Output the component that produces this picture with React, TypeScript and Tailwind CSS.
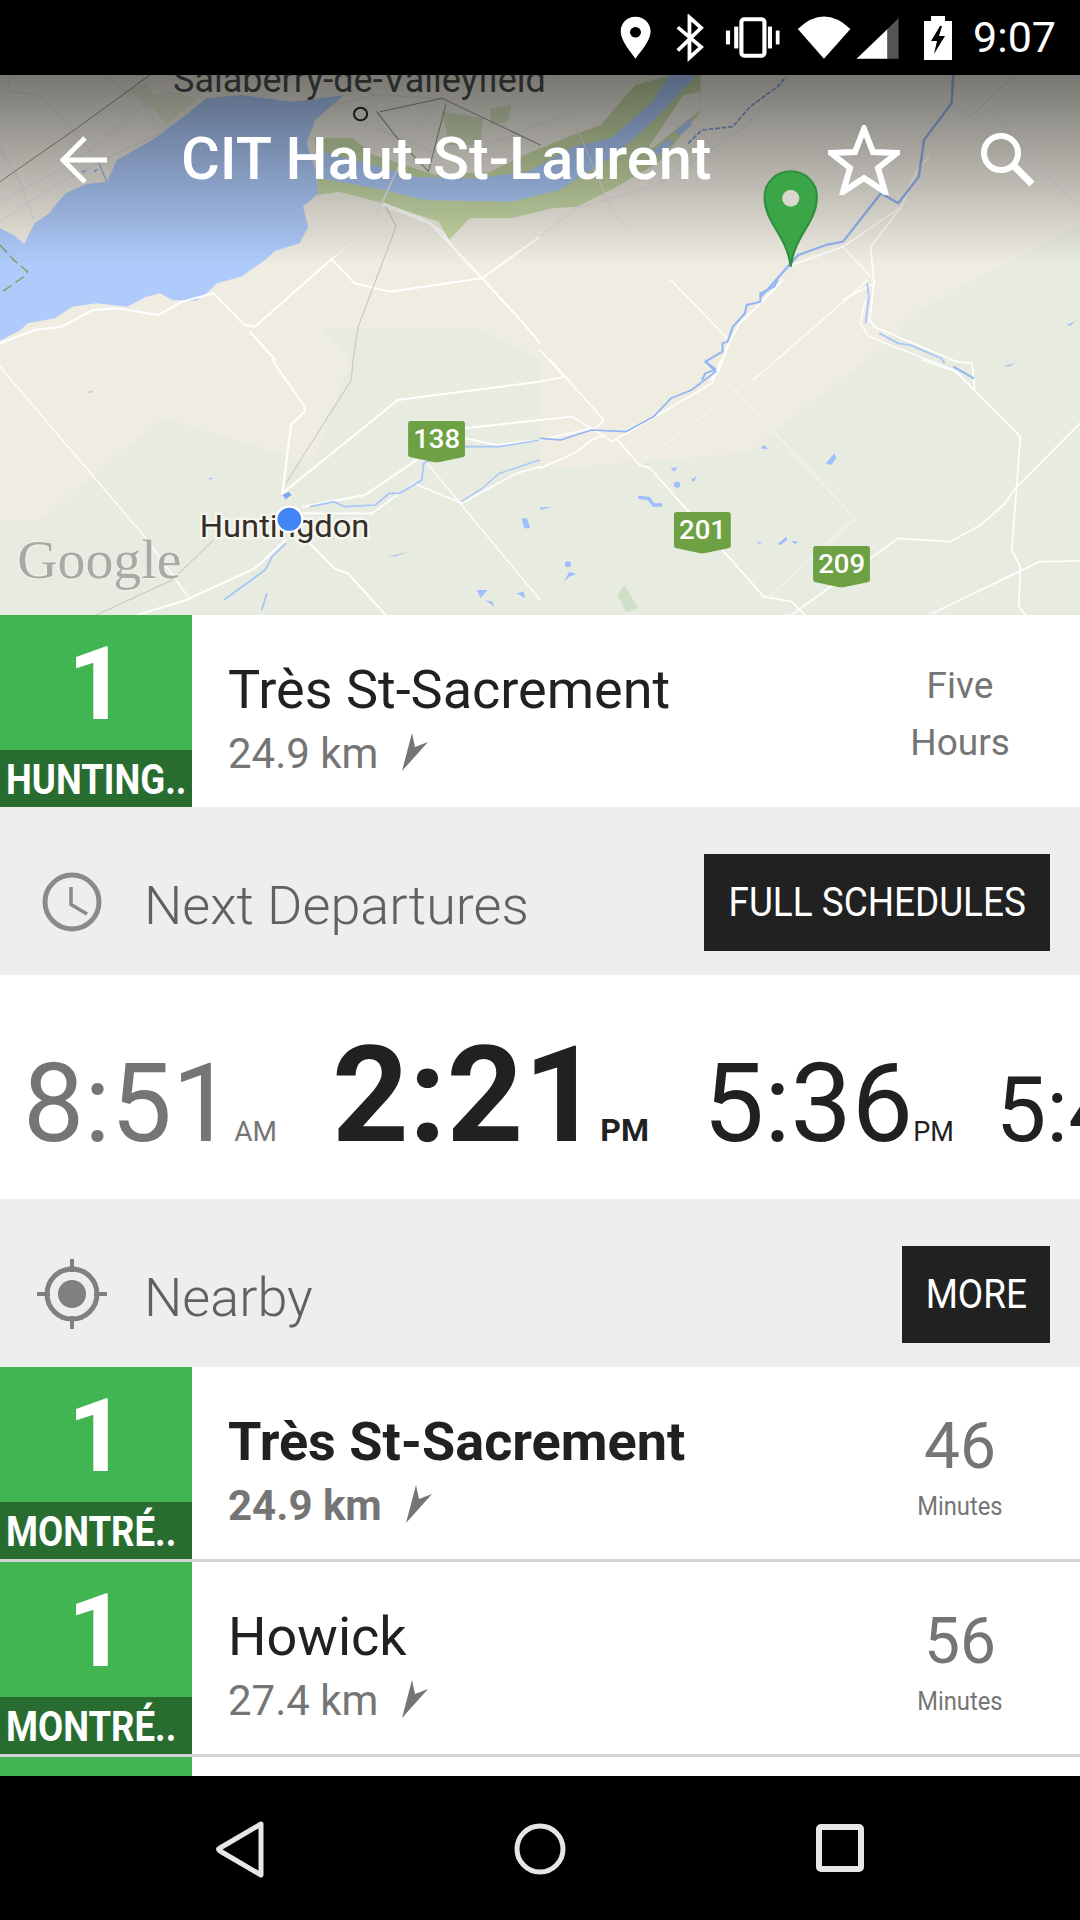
const Z1 = "translate(540,0) scale(0.3444,0.3333)";
const Z2 = "translate(0,60) scale(0.3444,0.3333)";
const Z3 = "translate(0,360) scale(0.3444,0.3333)";
const Z4 = "translate(540,360) scale(0.3444,0.3333)";
const Z5 = "translate(270,75) scale(0.3444,0.3333)";
const Z6 = "translate(0,75) scale(0.3333)";
const Z7 = "translate(540,280) scale(0.3444,0.3333)";

const lake =
  "0,505 40,525 70,552 100,490 140,462 190,400 250,372 310,365 340,300 400,265 450,235 520,180 600,115 700,105 850,125 1000,105 915,180 890,250 920,340 925,400 880,440 895,500 870,550 800,572 770,600 700,650 630,670 600,700 570,722 500,720 465,700 420,712 370,740 280,730 210,740 160,775 80,790 60,810 0,842";

const banks =
  "130,190 240,190 300,240 480,300 640,290 760,230 880,180 960,150 1060,30 1165,0 1250,0 1250,110 1130,260 1000,340 890,395 820,400 700,430 580,430 520,495 490,440 330,385 200,350 140,360";

const river =
  "150,230 300,270 420,305 600,310 750,290 880,215 990,190 1110,80 1160,0 1240,0 1100,150 1000,240 840,345 700,380 450,375 330,345 150,310";

const shieldPath =
  "M8 0 H157 Q165 0 165 8 V102 Q165 108 158 109 L95 122 Q82 125 70 122 L8 109 Q0 108 0 102 V8 Q0 0 8 0 Z";

function Shield({ x, y, label }: { x: number; y: number; label: string }) {
  return (
    <g transform={`translate(${x},${y})`}>
      <path d={shieldPath} fill="#6ea044" />
      <text x="83" y="80" textAnchor="middle" fontSize="80" fontWeight="500" fill="#fff" fontFamily="Roboto, sans-serif">
        {label}
      </text>
    </g>
  );
}

function Road({ d, w = 6, c = "#ffffff" }: { d: string; w?: number; c?: string }) {
  return <polyline points={d} fill="none" stroke={c} strokeWidth={w} strokeLinejoin="round" strokeLinecap="round" />;
}

function MapArt() {
  return (
    <svg viewBox="0 75 1080 540" className="block w-full h-full">
      <defs>
        <linearGradient id="shade" x1="0" y1="0" x2="0" y2="1">
          <stop offset="0" stopColor="#000" stopOpacity="0.5" />
          <stop offset="1" stopColor="#000" stopOpacity="0" />
        </linearGradient>
      </defs>
      <rect x="0" y="75" width="1080" height="540" fill="#e8ebdf" />
      <polygon
        points="0,75 1080,75 1080,224 919,310 867,360 747,453 540,470 310,463 162,418 41,520 0,520"
        fill="#efece2"
      />
      <polygon points="320,329 480,329 540,360 540,470 310,470 351,360" fill="#e8ebdf" />

      {/* lake, river and its green banks */}
      <g transform={Z2}>
        <polygon points={lake} fill="#aecbfb" />
        <Road d="0,850 100,810 180,800 270,750 340,745 460,765 530,725 620,700 710,795 740,800 960,600 1090,480" />
        <Road d="960,595 1030,670 1130,695 1400,655 1568,530" />
        <Road d="1400,655 1250,490 1110,435" />
        <Road d="1400,655 1520,790 1568,850" />
        <Road d="725,815 800,900" />
        <Road d="1120,440 1150,500 1040,800 1025,900" w={3} c="#c4c4be" />
        <polyline points="0,555 40,600 80,635 70,650 0,700" fill="none" stroke="#8a9a5a" strokeWidth="4" strokeDasharray="30 14" />
      </g>
      <g transform={Z6}>
        <polygon points="380,45 440,25 460,60 520,50 590,70 500,150 470,110" fill="#dfe6cf" />
        <Road d="0,380 170,290 290,215 430,90 560,20" w={5} c="#e4e4e8" />
        <Road d="0,440 150,340 330,245 470,180 570,110" w={5} c="#e4e4e8" />
        <Road d="310,0 430,90 490,170" w={5} c="#e4e4e8" />
        <Road d="25,0 25,50 120,60 220,170 300,260 320,320" w={3} c="#dcdce2" />
        <Road d="0,220 60,320 100,430" w={4} c="#e0e0e6" />
        <Road d="0,320 230,160 450,0" w={3} c="#8f8f8a" />
        <polygon points="245,288 262,286 250,294" fill="#8fb0e8" />
        <polygon points="280,286 296,282 286,292" fill="#8fb0e8" />
        <polyline points="295,262 320,320" fill="none" stroke="#8fb0e8" strokeWidth="3" />
      </g>
      <g transform={Z5}>
        <polygon points={banks} fill="#c6d8a6" />
        <polygon points={river} fill="#aecbfb" />
        <polygon points="1175,170 1220,130 1225,150 1190,180" fill="#aecbfb" />
        <polygon points="1110,230 1160,190 1170,205 1120,245" fill="#aecbfb" />
        <polygon points="1200,60 1250,50 1250,105 1170,170 1110,220 1100,215" fill="#efece2" />
        <polygon points="640,100 700,90 690,140 640,150" fill="#d3e0bd" />
        <polygon points="500,110 620,130 610,210 520,210" fill="#d3e0bd" />
        <Road d="330,385 440,430 500,470 550,540" w={5} />
        <Road d="190,540 300,440 340,350 420,170 500,70" w={5} c="#e8e8ea" />
        <Road d="500,70 300,60 190,90" w={4} c="#dedee0" />
        <Road d="600,225 875,110" w={3} c="#dedee0" />
        <Road d="310,160 470,230" w={3} c="#dedee0" />
        <Road d="835,0 900,180 990,400 1100,540" w={3} c="#e4e4e4" />
        <Road d="320,110 500,70 785,210" w={3} c="#8f8f8a" />
        <Road d="310,110 370,190 460,290 510,90" w={3} c="#8f8f8a" />
        <circle cx="263" cy="117" r="19" fill="none" stroke="#2b2b2b" strokeWidth="6" />
      </g>
      <g transform={Z1}>
        <Road d="0,710 105,625 340,555 590,385 720,235" w={5} c="#e4e4e4" />
        <Road d="730,795 880,740 1050,620 1095,510 1130,470" w={5} />
        <Road d="880,740 960,830" w={4} />
        <Road d="1050,620 960,740 970,850 880,900" w={5} />
        <Road d="1205,320 1260,355 1300,325 1568,630" w={4} c="#e4e4e4" />
        <Road d="1380,225 1250,350" w={3} c="#d8d8d4" />
        <Road d="1568,520 1520,570" w={3} c="#e4e4e4" />
        <polyline
          points="640,890 660,870 728,790 750,765 830,735 880,725 990,580 1040,610 1100,530 1115,420 1195,310 1200,225"
          fill="none"
          stroke="#94b6f2"
          strokeWidth="7"
          strokeLinejoin="round"
        />
        <polyline points="430,430 470,390 560,380 610,320 690,260 715,230" fill="none" stroke="#7ea0dc" strokeWidth="5" strokeDasharray="14 5" />
      </g>
      <g transform={Z7}>
        <Road d="380,0 530,160 550,185" w={4} />
        <Road d="705,0 640,70 580,130 550,185 520,270 495,300" w={5} />
        <Road d="970,0 958,120 970,140 1210,245 1255,250 1262,330" w={5} />
        <Road d="950,0 920,30 620,300" w={4} />
        <Road d="945,60 930,130 955,170 1200,270 1262,330" w={4} />
        <Road d="0,210 75,295" w={5} />
        <polyline
          points="690,0 680,20 640,40 640,65 600,75 595,100 560,140 545,185 530,190 530,215 480,245 510,268 480,280 470,300"
          fill="none"
          stroke="#94b6f2"
          strokeWidth="6"
          strokeLinejoin="round"
        />
        <polyline points="950,10 955,50 945,130" fill="none" stroke="#a6c5fb" strokeWidth="5" />
        <polyline points="985,160 1040,190 1075,195 1120,215 1165,235 1175,250" fill="none" stroke="#a6c5fb" strokeWidth="5" />
        <polyline points="1200,260 1260,295" fill="none" stroke="#94b6f2" strokeWidth="6" />
        <polygon points="1530,135 1555,122 1540,138" fill="#a6c5fb" />
        <polygon points="1345,258 1380,250 1360,260" fill="#a6c5fb" />
      </g>
      <g transform={Z3}>
        <Road d="0,20 420,530 550,715" w={4} />
        <Road d="790,0 885,140 885,155 845,195 820,400" w={6} />
        <Road d="820,400 1155,120 1568,65" w={6} />
        <Road d="880,440 1060,405 1210,300" w={6} />
        <Road d="1240,310 1568,720" w={4} />
        <Road d="1350,205 1568,180" w={6} />
        <Road d="1350,235 1440,255 1568,240" w={6} />
        <Road d="880,460 1080,460 1200,370 1340,430 1500,340 1568,320" w={5} />
        <Road d="900,550 970,625 1010,640 1120,765" w={6} />
        <Road d="400,765 540,720 740,625 830,540" w={6} />
        <Road d="1025,0 1020,60 830,370" w={3} c="#c6c8bf" />
        <Road d="280,765 500,660 620,540" w={3} c="#c6c8bf" />
        <polyline points="1568,300 1450,340 1400,385 1340,425" fill="none" stroke="#a6c5fb" strokeWidth="4" />
        <polyline points="900,440 970,425 1000,440 1090,435 1130,400 1160,400 1225,360 1230,310 1350,260 1450,260 1568,240" fill="none" stroke="#a6c5fb" strokeWidth="5" />
        <polyline points="830,550 790,590 770,630 650,720" fill="none" stroke="#a6c5fb" strokeWidth="5" />
        <polyline points="775,700 760,750" fill="none" stroke="#a6c5fb" strokeWidth="5" />
        <polygon points="820,405 838,395 846,405 830,418" fill="#7ba7f5" />
        <polygon points="1125,590 1185,576 1150,588" fill="#9dbffc" />
        <polygon points="1515,475 1530,475 1540,505 1522,505" fill="#9dbffc" />
        <polygon points="1385,690 1415,690 1395,715" fill="#9dbffc" />
        <polygon points="1410,720 1430,725 1435,740" fill="#9dbffc" />
        <polygon points="1500,700 1520,695 1525,715" fill="#9dbffc" />
        <polygon points="255,95 272,93 260,100" fill="#9dbffc" />
        <polygon points="605,355 618,353 610,360" fill="#9dbffc" />
        <Shield x={1185} y={183} label="138" />
        <text x="580" y="532" fontSize="95" fill="#352f28" stroke="#f6f6f1" strokeWidth="14" paintOrder="stroke" fontFamily="Roboto, sans-serif">
          Huntingdon
        </text>
        <circle cx="840" cy="478" r="38" fill="#4285f4" stroke="#fff" strokeWidth="7" />
        <text x="50" y="655" fontSize="162" fill="#a8aaa5" stroke="#f0f1ec" strokeWidth="6" paintOrder="stroke" fontFamily="Liberation Serif, serif">
          Google
        </text>
      </g>
      <g transform={Z4}>
        <Road d="0,65 75,50" w={5} />
        <Road d="30,0 185,180 155,210 95,170 0,180" w={5} />
        <Road d="0,240 150,205 210,245 500,70 525,0" w={5} />
        <Road d="0,325 100,280 150,240 190,225" w={5} />
        <Road d="225,240 290,315 320,325 650,710 730,725 770,765" w={5} />
        <Road d="515,35 915,475 660,715" w={4} c="#f3f3ed" />
        <Road d="290,310 690,0" w={4} c="#f3f3ed" />
        <Road d="730,765 1040,535 1190,545 1280,495 1350,430 1380,385 1568,190" w={5} />
        <Road d="1110,0 1210,35 1260,90 1395,230 1370,570 1395,620 1390,740 1410,765" w={5} />
        <Road d="1140,760 1450,605 1568,603" w={5} />
        <polyline points="0,235 60,240 150,210 250,215 330,170 380,115 440,90 510,35 480,5" fill="none" stroke="#8fb4f7" strokeWidth="5" />
        <polygon points="640,265 652,255 662,268" fill="#9dbffc" />
        <polygon points="830,310 855,280 860,295 845,315" fill="#9dbffc" />
        <polygon points="380,325 400,322 388,335" fill="#9dbffc" />
        <polygon points="438,360 455,348 448,365" fill="#9dbffc" />
        <circle cx="398" cy="374" r="9" fill="#9dbffc" />
        <polyline points="285,412 315,415 330,435 355,435" fill="none" stroke="#9dbffc" strokeWidth="10" />
        <polygon points="690,552 715,530 718,540 698,555" fill="#9dbffc" />
        <polygon points="732,542 750,545 738,553" fill="#9dbffc" />
        <polygon points="630,545 645,548 635,552" fill="#9dbffc" />
        <circle cx="81" cy="613" r="9" fill="#9dbffc" />
        <polygon points="70,665 85,635 105,642 85,650" fill="#9dbffc" />
        <polygon points="0,442 35,442 0,450" fill="#9dbffc" />
        <polygon points="225,705 245,675 285,745 250,755" fill="#cfdfc8" />
        <Shield x={389} y={456} label="201" />
        <Shield x={793} y={558} label="209" />
      </g>
      <rect x="0" y="75" width="1080" height="190" fill="url(#shade)" />
      <text x="173" y="92" fontSize="36" fill="#2a2a2a" fontFamily="Roboto, sans-serif">
        Salaberry-de-Valleyfield
      </text>
      <g transform={Z1}>
        <path
          d="M728 800 C715 700 652 670 652 590 A76 76 0 0 1 804 590 C804 670 741 700 728 800 Z"
          fill="#3aa648"
          stroke="#2f8f3e"
          strokeWidth="6"
        />
        <circle cx="728" cy="595" r="25" fill="#d8d8cc" />
      </g>
    </svg>
  );
}

function StatusIcons() {
  return (
    <svg viewBox="230 40 820 145" preserveAspectRatio="none" className="w-[282px] h-[48px]">
      <path d="M275 48 C248 48 232 70 232 92 C232 122 262 155 275 175 C288 155 319 122 319 92 C319 70 302 48 275 48 Z" fill="#fff" />
      <circle cx="275" cy="95" r="16" fill="#000" />
      <path d="M398 80 L466 140 L432 172 V50 L466 82 L398 150" fill="none" stroke="#fff" strokeWidth="11" />
      <rect x="583" y="56" width="67" height="110" rx="8" fill="none" stroke="#fff" strokeWidth="12" />
      <rect x="538" y="90" width="12" height="42" fill="#fff" />
      <rect x="562" y="78" width="12" height="66" fill="#fff" />
      <rect x="660" y="78" width="12" height="66" fill="#fff" />
      <rect x="683" y="90" width="11" height="42" fill="#fff" />
      <path d="M747 85 Q823 10 900 85 L823 175 Z" fill="#fff" />
      <path d="M918 175 L1008 85 V175 Z" fill="#fff" />
      <path d="M1008 85 L1040 52 V175 H1008 Z" fill="#555" />
    </svg>
  );
}

function BatteryIcon() {
  return (
    <svg viewBox="0 0 28 44" className="w-[28px] h-[44px]">
      <path d="M7 0 H21 V5 H28 V44 H0 V5 H7 Z" fill="#fff" />
      <path d="M16 10 L7 25 H13 L10 38 L21 20 H15 L18 10 Z" fill="#000" />
    </svg>
  );
}

function NorthArrow() {
  return (
    <svg viewBox="0 0 28 40" className="w-[28px] h-[40px] ml-[23px] -mt-[4px]">
      <path d="M11 1 L1 39 L27 10 L14 15 Z" fill="#757575" />
    </svg>
  );
}

type StopRowProps = {
  route: string;
  dest: string;
  stop: string;
  dist: string;
  bold?: boolean;
  right: React.ReactNode;
};

function RouteBadge({ route, dest }: { route: string; dest: string }) {
  return (
    <div className="w-[192px] shrink-0 h-full flex flex-col bg-[#41b551] text-white">
      <div className="flex-1 flex items-center justify-center pl-[2px] pt-[3px] text-[102px] leading-none font-bold">{route}</div>
      <div className="h-[57px] bg-[#286d2f] flex items-center pl-[6px] pt-[2px] overflow-hidden">
        <span className="text-[42px] font-bold leading-none whitespace-nowrap origin-left scale-x-[0.87]">{dest}</span>
      </div>
    </div>
  );
}

function StopRow({ route, dest, stop, dist, bold, right }: StopRowProps) {
  return (
    <div className="h-[192px] shrink-0 flex bg-white">
      <RouteBadge route={route} dest={dest} />
      <div className="flex-1 pl-[36px] pt-[43px]">
        <div className={`text-[54px] leading-[64px] text-[#212121] whitespace-nowrap ${bold ? "font-bold" : ""}`}>{stop}</div>
        <div className={`flex items-center mt-[9px] h-[46px] text-[42px] leading-none text-[#757575] ${bold ? "font-bold" : ""}`}>
          {dist}
          <NorthArrow />
        </div>
      </div>
      <div className="w-[200px] shrink-0 flex flex-col items-center justify-center text-[#757575] -translate-x-[20px] translate-y-[8px]">{right}</div>
    </div>
  );
}

function Minutes({ n }: { n: string }) {
  return (
    <>
      <div className="text-[64px] leading-[72px]">{n}</div>
      <div className="text-[25px] leading-[48px] scale-x-95">Minutes</div>
    </>
  );
}

function Section({ icon, title, action, width }: { icon: React.ReactNode; title: string; action: string; width: string }) {
  return (
    <div className="h-[168px] shrink-0 bg-[#eeeeee] flex items-center pr-[30px] pt-[22px]">
      <div className="w-[144px] flex justify-center pr-[1px]">{icon}</div>
      <div className="text-[54px] mt-[8px] font-light text-[#616161] leading-none">{title}</div>
      <div className={`ml-auto h-[97px] ${width} bg-[#212121] text-white text-[41px] leading-none flex items-center justify-center`}>
        <span className="scale-x-90 whitespace-nowrap">{action}</span>
      </div>
    </div>
  );
}

export default function App() {
  return (
    <div className="w-[1080px] h-[1920px] flex flex-col overflow-hidden bg-black font-[Roboto,sans-serif]">
      <div className="h-[75px] shrink-0 bg-black flex items-center justify-end pr-[24px] text-white">
        <StatusIcons />
        <div className="ml-[22px]"><BatteryIcon /></div>
        <div className="ml-[21px] text-[43px] leading-none">9:07</div>
      </div>

      <div className="relative h-[540px] shrink-0 overflow-hidden">
        <MapArt />
        <div className="absolute top-0 inset-x-0 h-[170px] flex items-center text-white">
          <svg viewBox="0 0 48 48" className="w-[48px] h-[48px] ml-[60px]">
            <path d="M47 24 H3 M25 2 L3 24 L25 46" fill="none" stroke="#fff" strokeWidth="5" />
          </svg>
          <div className="ml-[73px] text-[59.5px] font-medium leading-none whitespace-nowrap">CIT Haut-St-Laurent</div>
          <svg viewBox="0 0 72 70" className="w-[72px] h-[70px] ml-auto">
            <path d="M36 4 L45 27 L69 28 L50 43 L57 67 L36 53 L15 67 L22 43 L3 28 L27 27 Z" fill="none" stroke="#fff" strokeWidth="6" />
          </svg>
          <svg viewBox="0 0 56 56" className="w-[56px] h-[56px] ml-[80px] mr-[44px]">
            <circle cx="21" cy="21" r="17" fill="none" stroke="#fff" strokeWidth="6" />
            <path d="M33 33 L52 52" stroke="#fff" strokeWidth="7" />
          </svg>
        </div>
      </div>

      <StopRow
        route="1"
        dest="HUNTING.."
        stop="Très St-Sacrement"
        dist="24.9 km"
        right={
          <div className="text-[37px] leading-[57px] text-center -translate-y-[5px]">
            Five
            <br />
            Hours
          </div>
        }
      />

      <Section
        title="Next Departures"
        action="FULL SCHEDULES"
        width="w-[346px]"
        icon={
          <svg viewBox="0 0 60 60" className="w-[60px] h-[60px]">
            <circle cx="30" cy="30" r="27" fill="none" stroke="#8a8a8a" strokeWidth="5" />
            <path d="M29 15 V32.5 L45 42" fill="none" stroke="#8a8a8a" strokeWidth="3.5" />
          </svg>
        }
      />

      <div className="h-[224px] shrink-0 bg-white flex items-baseline pt-[54px] pl-[23px] overflow-hidden whitespace-nowrap leading-none">
        <span className="text-[109px] text-[#757575]">8:51</span>
        <span className="ml-[1px] text-[28px] text-[#757575]">AM</span>
        <span className="ml-[55px] text-[134px] font-bold text-[#212121]">2:21</span>
        <span className="ml-[0px] text-[32px] font-bold text-[#212121]">PM</span>
        <span className="ml-[54px] text-[109px] text-[#212121]">5:36</span>
        <span className="ml-[0px] text-[27px] text-[#212121]">PM</span>
        <span className="ml-[42px] text-[90px] text-[#212121]">5:41</span>
      </div>

      <Section
        title="Nearby"
        action="MORE"
        width="w-[148px]"
        icon={
          <svg viewBox="0 0 72 72" className="w-[72px] h-[72px]">
            <circle cx="36" cy="36" r="25" fill="none" stroke="#808080" strokeWidth="5" />
            <circle cx="36" cy="36" r="14" fill="#808080" />
            <path d="M36 1 V14 M36 58 V71 M1 36 H14 M58 36 H71" stroke="#808080" strokeWidth="4" />
          </svg>
        }
      />

      <StopRow route="1" dest="MONTRÉ.." stop="Très St-Sacrement" dist="24.9 km" bold right={<Minutes n="46" />} />
      <div className="h-[3px] shrink-0 bg-[#d4d4d4]" />
      <StopRow route="1" dest="MONTRÉ.." stop="Howick" dist="27.4 km" right={<Minutes n="56" />} />
      <div className="h-[3px] shrink-0 bg-[#d4d4d4]" />
      <div className="h-[19px] shrink-0 flex bg-white">
        <div className="w-[192px] bg-[#41b551]" />
      </div>

      <div className="flex-1 bg-black flex items-center justify-center">
        <svg viewBox="0 0 1080 144" className="w-[1080px] h-[144px]">
          <path d="M261 48 L220 72 Q217 73 220 75 L261 99 Z" fill="none" stroke="#e6e6e6" strokeWidth="5" strokeLinejoin="round" />
          <circle cx="540" cy="73" r="23" fill="none" stroke="#e6e6e6" strokeWidth="5" />
          <rect x="819" y="51" width="42" height="42" rx="2" fill="none" stroke="#e6e6e6" strokeWidth="6" />
        </svg>
      </div>
    </div>
  );
}
